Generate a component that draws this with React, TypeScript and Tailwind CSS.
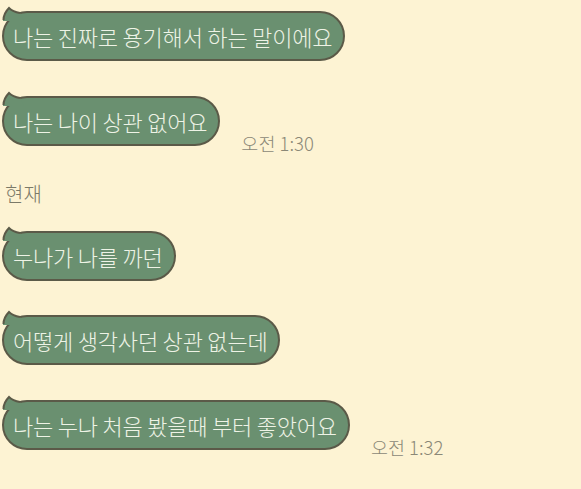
const font = `font-['Noto_Sans_CJK_KR','Noto_Sans',sans-serif]`;

function Bubble({ text }: { text: string }) {
  return (
    <div className="relative inline-flex h-[50px] items-center rounded-full border-2 border-[#5b5a48] bg-[#6a9070] pl-[9px] pr-[11px]">
      <svg
        className="absolute left-[-2px] top-[-8px]"
        width="22"
        height="16"
        viewBox="0 0 22 16"
      >
        <path
          d="M1 16 C1 10 4 6 7 3 C9 5 12 7 18 8 L22 16 Z"
          fill="#6a9070"
        />
        <path
          d="M1.5 15 C1.5 10 4 6 7 3 C9 5 12 7 18 8"
          fill="none"
          stroke="#5b5a48"
          strokeWidth="2"
        />
      </svg>
      <span className="relative text-[22px] font-light leading-none tracking-[-0.2px] text-[#eef3e6]">
        {text}
      </span>
    </div>
  );
}

function Time({ value }: { value: string }) {
  return (
    <span className="mb-[-6px] ml-[21px] text-[18.5px] font-light leading-none text-[#8b8877]">
      {value}
    </span>
  );
}

export default function App() {
  return (
    <div className={`${font} h-[489px] w-[581px] overflow-hidden bg-[#fdf3d3] pl-[2px] pt-[11px]`}>
      <div className="flex">
        <Bubble text="나는 진짜로 용기해서 하는 말이에요" />
      </div>
      <div className="mt-[35px] flex items-end">
        <Bubble text="나는 나이 상관 없어요" />
        <Time value="오전 1:30" />
      </div>
      <div className="mt-[38px] pl-[3px] text-[20px] font-light leading-none text-[#7b7968]">
        현재
      </div>
      <div className="mt-[27px] flex">
        <Bubble text="누나가 나를 까던" />
      </div>
      <div className="mt-[34px] flex">
        <Bubble text="어떻게 생각사던 상관 없는데" />
      </div>
      <div className="mt-[35px] flex items-end">
        <Bubble text="나는 누나 처음 봤을때 부터 좋았어요" />
        <Time value="오전 1:32" />
      </div>
    </div>
  );
}
